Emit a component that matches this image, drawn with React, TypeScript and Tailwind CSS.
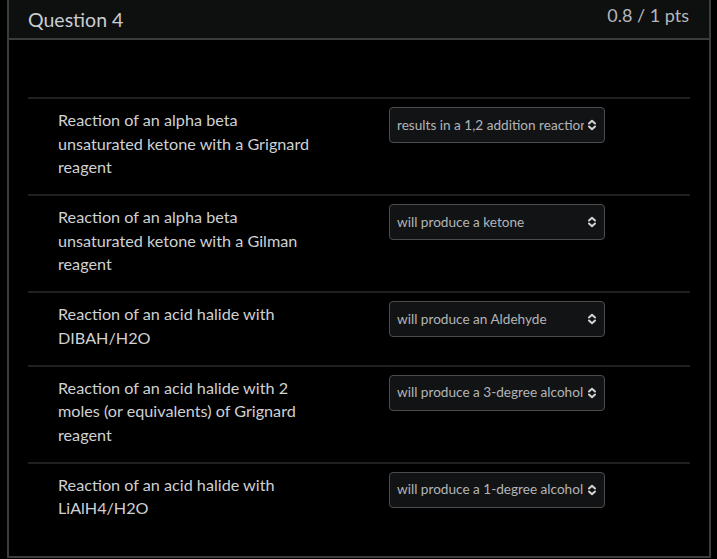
import React from "react";

const rows = [
  {
    prompt: "Reaction of an alpha beta unsaturated ketone with a Grignard reagent",
    answer: "results in a 1,2 addition reaction",
  },
  {
    prompt: "Reaction of an alpha beta unsaturated ketone with a Gilman reagent",
    answer: "will produce a ketone",
  },
  {
    prompt: "Reaction of an acid halide with DIBAH/H2O",
    answer: "will produce an Aldehyde",
  },
  {
    prompt: "Reaction of an acid halide with 2 moles (or equivalents) of Grignard reagent",
    answer: "will produce a 3-degree alcohol",
  },
  {
    prompt: "Reaction of an acid halide with LiAlH4/H2O",
    answer: "will produce a 1-degree alcohol",
  },
];

function UpDown() {
  return (
    <svg width="10" height="12" viewBox="0 0 10 12" fill="none" className="shrink-0">
      <path d="M2 4.5 L5 1.8 L8 4.5" stroke="#d4d4d4" strokeWidth="2" strokeLinecap="round" strokeLinejoin="round" />
      <path d="M2 7.5 L5 10.2 L8 7.5" stroke="#d4d4d4" strokeWidth="2" strokeLinecap="round" strokeLinejoin="round" />
    </svg>
  );
}

function AnswerSelect({ value }: { value: string }) {
  return (
    <div className="flex h-[36px] w-[216px] shrink-0 items-center gap-[3px] rounded-[4px] border border-[#4a4c4e] bg-[#121314] pl-[7px] pr-[7px]">
      <span className="flex-1 overflow-hidden whitespace-nowrap text-[13.6px] text-[#b2b5b8]">{value}</span>
      <UpDown />
    </div>
  );
}

export default function App() {
  return (
    <div className="h-[559px] w-[717px] bg-black" style={{ fontFamily: "Lato, 'Open Sans', sans-serif" }}>
      <div className="ml-[7px] flex h-[558px] w-[704px] flex-col border-x-2 border-b-2 border-[#3b3c3d]">
        <div className="flex h-[40px] items-start justify-between border-b-2 border-[#3b3c3d] bg-[#0e0f0f] pl-[19px] pr-[20px]">
          <h2 className="pt-[5px] text-[19.5px] text-[#c9cdd1]">Question 4</h2>
          <span className="pt-[2px] text-[18px] text-[#b4b8bc]">0.8 / 1 pts</span>
        </div>
        <div className="flex-1 px-[19px] pt-[57px]">
          {rows.map((r, i) => (
            <div key={i} className="flex border-t-2 border-[#1f2021] pb-[15.5px] pt-[8px]">
              <p className="w-[361px] shrink-0 pl-[30px] pr-[68px] pt-[1px] text-[16.2px] leading-[23.5px] text-[#cfd1d3]">
                {r.prompt}
              </p>
              <AnswerSelect value={r.answer} />
            </div>
          ))}
        </div>
      </div>
    </div>
  );
}
